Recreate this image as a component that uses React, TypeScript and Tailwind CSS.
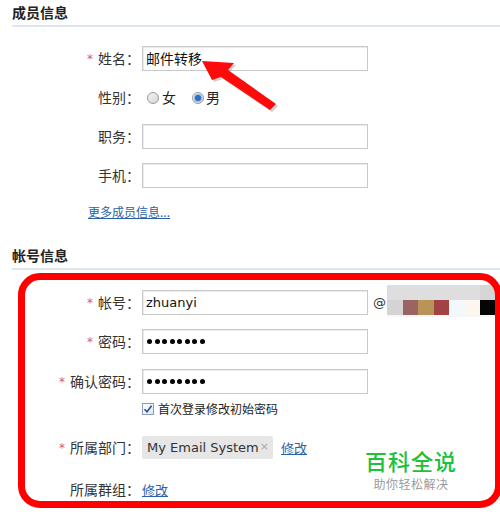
import React from 'react'

const cjk = "font-['Noto_Sans_CJK_SC','Microsoft_YaHei',sans-serif]"
const latin = "font-['DejaVu_Sans','Noto_Sans_CJK_SC',sans-serif]"

function Label({ text, required }: { text: string; required?: boolean }) {
  return (
    <div className={`w-[142px] pr-[2px] flex justify-end items-center text-[14px] text-[#333] ${cjk}`}>
      {required && <span className="mr-[5px] text-[12px] text-[#e05a5a] font-['DejaVu_Sans',sans-serif]">*</span>}
      <span>{text}：</span>
    </div>
  )
}

function TextInput({ children }: { children?: React.ReactNode }) {
  return (
    <div className="w-[226px] h-[25px] border border-[#c9c9c9] shadow-[inset_1px_1px_0_#ececec] bg-white flex items-center pl-[3px] text-[14px] text-[#111]">
      {children}
    </div>
  )
}

function Dots() {
  return (
    <div className="flex items-center gap-[2.5px] pl-[1px]">
      {Array.from({ length: 8 }).map((_, i) => (
        <div key={i} className="w-[5px] h-[5px] rounded-full bg-black" />
      ))}
    </div>
  )
}

function Radio({ checked }: { checked?: boolean }) {
  return (
    <div className="w-[12px] h-[12px] rounded-full border border-[#9a9a9a] bg-gradient-to-br from-[#f4f4f4] to-[#d6d6d6] flex items-center justify-center">
      {checked && <div className="w-[6px] h-[6px] rounded-full bg-[#2b6fc4] ring-1 ring-[#8fb6e6]" />}
    </div>
  )
}

function SectionTitle({ children }: { children: React.ReactNode }) {
  return (
    <div className={`ml-[12px] h-[27px] border-b-2 border-[#dde6ee] text-[14px] font-bold leading-[25px] text-[#222] ${cjk}`}>
      {children}
    </div>
  )
}

const pixelTop = ['#dedede', '#dedede', '#dedede', '#dedede', '#dedede', '#dedede', '#d6d6d6']
const pixelMid = ['#d4d4d4', '#9b6363', '#b99457', '#a14343', '#f2f9fc', '#fdf6ef', '#050505']

export default function App() {
  return (
    <div className={`relative w-[500px] h-[522px] bg-white overflow-hidden ${cjk}`}>
      <div>
        <SectionTitle>成员信息</SectionTitle>

        <div className="mt-[19px] flex h-[25px]">
          <Label text="姓名" required />
          <TextInput><span className={cjk}>邮件转移</span></TextInput>
        </div>

        <div className="mt-[14px] flex h-[25px]">
          <Label text="性别" />
          <div className="flex items-center text-[14px] text-[#222] pl-[5px]">
            <Radio />
            <span className="ml-[3px]">女</span>
            <div className="ml-[16px]"><Radio checked /></div>
            <span className="ml-[2px]">男</span>
          </div>
        </div>

        <div className="mt-[14px] flex h-[25px]">
          <Label text="职务" />
          <TextInput />
        </div>

        <div className="mt-[14px] flex h-[25px]">
          <Label text="手机" />
          <TextInput />
        </div>

        <div className="mt-[14px] h-[20px] pl-[88px] flex items-center">
          <span className="text-[12px] text-[#2a62a8] underline">更多成员信息...</span>
        </div>
      </div>

      <div className="mt-[21px]">
        <SectionTitle>帐号信息</SectionTitle>

        <div className="mt-[20px] flex h-[25px]">
          <Label text="帐号" required />
          <TextInput><span className={`${latin} text-[13px]`}>zhuanyi</span></TextInput>
          <span className={`${latin} ml-[5px] text-[13px] text-[#333] leading-[25px]`}>@</span>
          <div className="ml-[1px] -mt-[5px] self-start flex flex-col">
            <div className="flex">
              {pixelTop.map((c, i) => (
                <div key={i} className="w-[15.5px] h-[15px]" style={{ background: c }} />
              ))}
            </div>
            <div className="flex">
              {pixelMid.map((c, i) => (
                <div key={i} className="w-[15.5px] h-[15px]" style={{ background: c }} />
              ))}
            </div>
            <div className="h-[2px] bg-[#f6f6f6]" />
          </div>
        </div>

        <div className="mt-[14px] flex h-[25px]">
          <Label text="密码" required />
          <TextInput><Dots /></TextInput>
        </div>

        <div className="mt-[15px] flex h-[25px]">
          <Label text="确认密码" required />
          <TextInput><Dots /></TextInput>
        </div>

        <div className="mt-[6px] flex h-[18px] items-center pl-[142px]">
          <div className="w-[12px] h-[12px] border border-[#8e9db4] bg-gradient-to-br from-[#ffffff] to-[#dfe6ef] flex items-center justify-center">
            <svg width="10" height="10" viewBox="0 0 10 10">
              <path d="M1.5 5.2 L4 7.8 L8.6 1.8" fill="none" stroke="#2b4f9a" strokeWidth="1.6" />
            </svg>
          </div>
          <span className="ml-[4px] text-[12px] text-[#222]">首次登录修改初始密码</span>
        </div>

        <div className="mt-[18px] flex h-[23px]">
          <Label text="所属部门" required />
          <div className="w-[131px] h-[23px] rounded-[2px] bg-[#e6e6e6] flex items-center pl-[5px] overflow-hidden">
            <span className={`${latin} text-[13px] text-[#333] whitespace-nowrap`}>My Email System</span>
            <span className={`${latin} ml-[1px] text-[11px] text-[#aaa]`}>×</span>
          </div>
          <span className="ml-[8px] text-[13px] text-[#2a62a8] underline leading-[23px]">修改</span>
        </div>

        <div className="mt-[18px] flex h-[25px]">
          <Label text="所属群组" />
          <span className="text-[13px] text-[#2a62a8] underline leading-[25px]">修改</span>
        </div>
      </div>

      {/* annotation: red frame */}
      <div className="absolute left-[18px] top-[273px] w-[484px] h-[235px] border-[7px] border-[#ff0000] rounded-[22px] pointer-events-none" />

      {/* annotation: arrow */}
      <svg className="absolute left-0 top-0 pointer-events-none" width="500" height="130">
        <polygon points="204,63 236,65 230,72 278,106 272,112 223,79 214,82" fill="#7a7a7a" opacity="0.35" />
        <polygon points="202,61 234,63 228,70 276,104 270,110 221,77 212,80" fill="#ff0a0a" />
      </svg>

      {/* watermark */}
      <div className="absolute left-[365px] top-[449px] flex flex-col items-center">
        <span className="text-[22px] leading-[22px] font-medium text-[#1fc13b] tracking-[1px]">百科全说</span>
        <span className="text-[12px] leading-[14px] text-[#9a9a9a] mt-[6px] tracking-[0.5px]">助你轻松解决</span>
      </div>
    </div>
  )
}
